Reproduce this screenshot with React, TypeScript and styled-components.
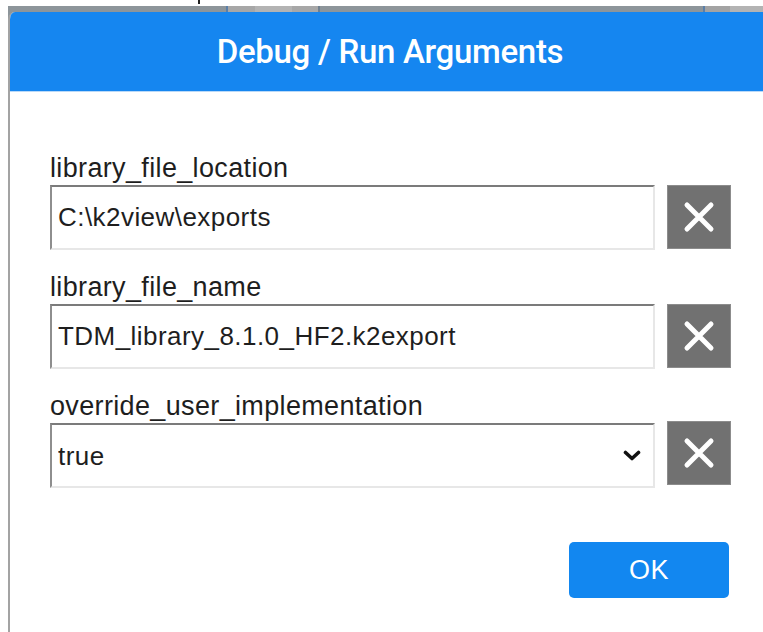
import React from "react";
import styled, { createGlobalStyle } from "styled-components";

const GlobalStyle = createGlobalStyle`
  html, body {
    margin: 0;
    padding: 0;
    background: #ffffff;
    overflow: hidden;
  }
  body {
    font-family: "Liberation Sans", Arial, sans-serif;
  }
`;

const Screen = styled.div`
  width: 763px;
  height: 632px;
  display: flex;
  flex-direction: column;
  overflow: hidden;
  background: #ffffff;
`;

const TopStrip = styled.div`
  height: 6px;
  display: flex;
  align-items: flex-start;
  flex-shrink: 0;
`;

const Tick = styled.span<{ $left: number; $top: number; $h: number }>`
  width: 2px;
  height: ${(p) => p.$h}px;
  margin-left: ${(p) => p.$left}px;
  margin-top: ${(p) => p.$top}px;
  background: #222;
`;

/* Page content behind the modal, only a thin band of it is visible */
const Backdrop = styled.div`
  margin-left: 8px;
  flex: 1;
  display: flex;
  flex-direction: column;
  background: linear-gradient(
    to right,
    #8d959a 0px,
    #8d959a 218px,
    #5a7fa8 218px,
    #5a7fa8 220px,
    #a7a7a7 220px,
    #a7a7a7 247px,
    #b3b3b3 247px,
    #b3b3b3 284px,
    #a7a7a7 284px,
    #a7a7a7 310px,
    #70808f 310px,
    #70808f 312px,
    #8d959a 312px,
    #8d959a 695px,
    #5a7fa8 695px,
    #5a7fa8 697px,
    #a3a3a3 697px,
    #a3a3a3 722px,
    #b3b3b3 722px
  );
`;

const Dialog = styled.div`
  margin-top: 6px;
  flex: 1;
  width: 790px;
  display: flex;
  flex-direction: column;
  background: #ffffff;
  border-left: 2px solid #a3a3a3;
  border-top-left-radius: 7px;
  overflow: hidden;
`;

const Header = styled.div`
  height: 79px;
  flex-shrink: 0;
  display: flex;
  align-items: center;
  justify-content: center;
  background: #1586f0;
  border-bottom: 1px solid #b9d9f8;
  padding-right: 30px;
`;

const Title = styled.h1`
  margin: 0;
  font-family: Roboto, "Liberation Sans", sans-serif;
  font-weight: 500;
  font-size: 33px;
  color: #ffffff;
  letter-spacing: -0.3px;
`;

const Body = styled.div`
  display: flex;
  flex-direction: column;
  padding: 60px 0 0 40px;
  width: 681px;
`;

const Fields = styled.div`
  display: flex;
  flex-direction: column;
  gap: 21px;
`;

const Field = styled.div`
  display: flex;
  flex-direction: column;
`;

const Label = styled.label`
  font-family: "Liberation Sans", Arial, sans-serif;
  font-size: 27px;
  line-height: 32px;
  color: #1e1e1e;
  margin-bottom: 1px;
  letter-spacing: 0.35px;
`;

const Row = styled.div`
  display: flex;
  align-items: flex-start;
  gap: 12px;
`;

const boxBorder = `
  box-sizing: border-box;
  height: 65px;
  width: 605px;
  border-top: 2px solid #7b7b7b;
  border-left: 2px solid #8e8e8e;
  border-right: 2px solid #e7e7e7;
  border-bottom: 2px solid #e7e7e7;
  background: #ffffff;
`;

const TextInput = styled.input`
  ${boxBorder}
  padding: 0 6px;
  font-family: "Liberation Sans", Arial, sans-serif;
  font-size: 26px;
  letter-spacing: 0.45px;
  color: #1e1e1e;
  outline: none;
`;

const SelectShell = styled.div`
  ${boxBorder}
  display: flex;
  align-items: center;
  padding-right: 12px;
`;

const Select = styled.select`
  flex: 1;
  height: 100%;
  appearance: none;
  -webkit-appearance: none;
  border: none;
  background: transparent;
  padding: 0 6px;
  font-family: "Liberation Sans", Arial, sans-serif;
  font-size: 26px;
  letter-spacing: 0.45px;
  color: #1e1e1e;
  outline: none;
`;

const ClearButton = styled.button<{ $shift?: number }>`
  box-sizing: border-box;
  width: 64px;
  height: 64px;
  margin-top: ${(p) => p.$shift ?? 0}px;
  padding: 0;
  display: flex;
  align-items: center;
  justify-content: center;
  background: #717171;
  border: 1px solid #8c8c8c;
  cursor: pointer;
`;

const Footer = styled.div`
  display: flex;
  justify-content: flex-end;
  margin-top: 54px;
  padding-right: 2px;
`;

const OkButton = styled.button`
  width: 160px;
  height: 56px;
  border: none;
  border-radius: 5px;
  background: #1287f0;
  color: #ffffff;
  font-family: "Liberation Sans", Arial, sans-serif;
  font-size: 27px;
  letter-spacing: 0.4px;
  cursor: pointer;
`;

const CrossIcon = () => (
  <svg width="32" height="32" viewBox="0 0 32 32" aria-hidden="true">
    <path
      d="M4 4 L28 28 M28 4 L4 28"
      stroke="#ffffff"
      strokeWidth="5"
      strokeLinecap="round"
      fill="none"
    />
  </svg>
);

const Chevron = () => (
  <svg width="18" height="11" viewBox="0 0 18 11" aria-hidden="true">
    <path
      d="M2.5 2.5 L9 8.5 L15.5 2.5"
      stroke="#111111"
      strokeWidth="3.6"
      strokeLinecap="round"
      strokeLinejoin="round"
      fill="none"
    />
  </svg>
);

type TextArg = { name: string; value: string };

const textArgs: TextArg[] = [
  { name: "library_file_location", value: "C:\\k2view\\exports" },
  { name: "library_file_name", value: "TDM_library_8.1.0_HF2.k2export" },
];

export default function App() {
  return (
    <>
      <GlobalStyle />
      <Screen>
        <TopStrip>
          <Tick $left={198} $top={0} $h={4} />
        </TopStrip>
        <Backdrop>
          <Dialog>
            <Header>
              <Title>Debug / Run Arguments</Title>
            </Header>
            <Body>
              <Fields>
                {textArgs.map((arg) => (
                  <Field key={arg.name}>
                    <Label htmlFor={arg.name}>{arg.name}</Label>
                    <Row>
                      <TextInput id={arg.name} defaultValue={arg.value} />
                      <ClearButton aria-label="Clear">
                        <CrossIcon />
                      </ClearButton>
                    </Row>
                  </Field>
                ))}
                <Field>
                  <Label htmlFor="override_user_implementation">
                    override_user_implementation
                  </Label>
                  <Row>
                    <SelectShell>
                      <Select id="override_user_implementation" defaultValue="true">
                        <option value="true">true</option>
                        <option value="false">false</option>
                      </Select>
                      <Chevron />
                    </SelectShell>
                    <ClearButton aria-label="Clear" $shift={-2}>
                      <CrossIcon />
                    </ClearButton>
                  </Row>
                </Field>
              </Fields>
              <Footer>
                <OkButton>OK</OkButton>
              </Footer>
            </Body>
          </Dialog>
        </Backdrop>
      </Screen>
    </>
  );
}
